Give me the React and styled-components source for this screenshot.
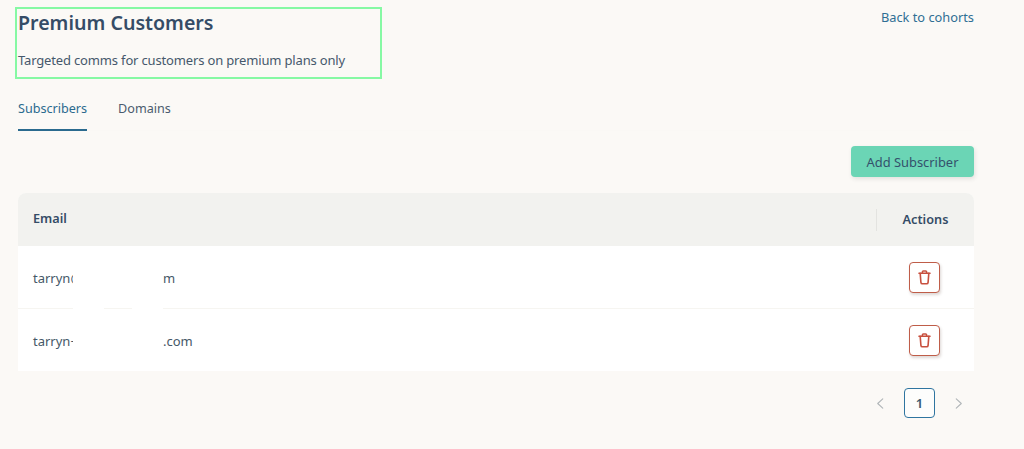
import React from "react";
import styled, { createGlobalStyle } from "styled-components";

const Global = createGlobalStyle`
  html, body { margin: 0; padding: 0; background: #fbf9f6; }
  body { font-family: "Noto Sans", "Open Sans", sans-serif; color: #3b5068; }
  * { box-sizing: border-box; }
`;

const Page = styled.div`
  width: 1024px;
  height: 449px;
  overflow: hidden;
  padding: 7px 50px 0 18px;
  background: #fbf9f6;
`;

const Head = styled.header`
  display: flex;
  justify-content: space-between;
  align-items: flex-start;
`;

const TitleBlock = styled.div`
  width: 367px;
  height: 72px;
  margin-left: -3px;
  padding: 0 0 0 3px;
  border: 2px solid #86f9a4;
`;

const Title = styled.h1`
  margin: 0 0 0 -2px;
  font-size: 19.6px;
  line-height: 28px;
  font-weight: 600;
  color: #354c66;
`;

const Subtitle = styled.p`
  margin: 13px 0 0 -2px;
  font-size: 13px;
  letter-spacing: -0.16px;
  line-height: 20px;
  color: #46586c;
`;

const BackLink = styled.a`
  font-size: 12.8px;
  line-height: 20px;
  color: #2f6f94;
`;

const Tabs = styled.nav`
  display: flex;
  gap: 31px;
  margin-top: 12px;
  height: 40px;
  border-bottom: 1px solid #faf8f5;
`;

const Tab = styled.div`
  height: 40px;
  padding-top: 8px;
  font-size: 12.6px;
  line-height: 20px;
  color: ${(p) => (p.$active ? "#2a6a8e" : "#4a5b6e")};
  border-bottom: ${(p) => (p.$active ? "2px solid #2a6a8e" : "none")};
`;

const Toolbar = styled.div`
  display: flex;
  justify-content: flex-end;
  margin-top: 15px;
`;

const AddButton = styled.button`
  width: 123px;
  height: 31px;
  border: 0;
  border-radius: 4px;
  background: #6bd5b5;
  box-shadow: 1px 2px 4px rgba(60, 60, 60, 0.12);
  font: 400 12.9px "Noto Sans", sans-serif;
  color: #34516c;
`;

const Table = styled.section`
  position: relative;
  margin-top: 16px;
  border-radius: 8px 8px 0 0;
  overflow: hidden;
  background: #fff;
`;

const HeaderRow = styled.div`
  display: grid;
  grid-template-columns: 1fr 98px;
  height: 53px;
  align-items: center;
  background: #f2f2ef;
  font-size: 12.7px;
  font-weight: 600;
  color: #354c66;
`;

const EmailHead = styled.div`
  padding: 0 0 3px 15px;
`;

const ActionsHead = styled.div`
  height: 22px;
  padding-bottom: 2px;
  line-height: 20px;
  text-align: center;
  border-left: 1px solid #e3e3e0;
`;

const Row = styled.div`
  display: grid;
  grid-template-columns: 1fr 98px;
  align-items: center;
  height: ${(p) => (p.$last ? "62px" : "63px")};
  border-bottom: ${(p) => (p.$last ? "none" : "1px solid #f6f5f1")};
`;

const Email = styled.div`
  display: flex;
  padding: 1px 0 0 15px;
  font-size: 13px;
  line-height: 20px;
  color: #465868;
`;

const Visible = styled.span`
  width: 40px;
  white-space: nowrap;
`;

const Hidden = styled.span`
  position: relative;
  width: 90px;
  flex: none;
  background: #fff;
`;

const ActionCell = styled.div`
  display: flex;
  justify-content: center;
  padding-right: 2px;
`;

const DeleteButton = styled.button`
  display: flex;
  align-items: center;
  justify-content: center;
  width: 31px;
  height: 31px;
  padding: 0;
  border: 1px solid #bf5d49;
  border-radius: 4px;
  background: #fff;
  box-shadow: 1px 2px 3px rgba(90, 60, 50, 0.2);
`;

const Redaction = styled.span`
  position: absolute;
  top: 114px;
  left: ${(p) => p.$left}px;
  width: 31px;
  height: 3px;
  background: #fff;
`;

const Pager = styled.div`
  display: flex;
  align-items: center;
  justify-content: flex-end;
  gap: 18px;
  margin-top: 17px;
  padding-right: 9px;
`;

const PageArrow = styled.span`
  display: flex;
  width: 12px;
  justify-content: center;
`;

const PageNumber = styled.div`
  width: 31px;
  height: 30px;
  border: 1px solid #2f75a0;
  border-radius: 4px;
  background: #fdfdfc;
  text-align: center;
  line-height: 28px;
  font-size: 13px;
  font-weight: 600;
  color: #3a5a70;
`;

const TrashIcon = () => (
  <svg width="13" height="15" viewBox="0 0 13 15" fill="none" stroke="#c8503f" strokeWidth="1.6" strokeLinecap="round" strokeLinejoin="round">
    <path d="M1 3.2h11" />
    <path d="M4.4 3V1.9c0-.5.3-.9.9-.9h2.4c.6 0 .9.4.9.9V3" />
    <path d="M2.2 3.4l.7 8.9c.1.9.6 1.5 1.4 1.5h4.4c.8 0 1.3-.6 1.4-1.5l.7-8.9" />
  </svg>
);

const Chevron = ({ dir }) => (
  <svg width="8" height="11" viewBox="0 0 8 12" fill="none" stroke="#b0b5b8" strokeWidth="1.2" strokeLinecap="round" strokeLinejoin="round">
    <path d={dir === "left" ? "M7 1L1.5 6 7 11" : "M1 1l5.5 5L1 11"} />
  </svg>
);

const rows = [
  { head: "tarryn@", tail: "m" },
  { head: "tarryn+", tail: ".com" },
];

export default function App() {
  return (
    <Page>
      <Global />
      <Head>
        <TitleBlock>
          <Title>Premium Customers</Title>
          <Subtitle>Targeted comms for customers on premium plans only</Subtitle>
        </TitleBlock>
        <BackLink>Back to cohorts</BackLink>
      </Head>
      <Tabs>
        <Tab $active>Subscribers</Tab>
        <Tab>Domains</Tab>
      </Tabs>
      <Toolbar>
        <AddButton>Add Subscriber</AddButton>
      </Toolbar>
      <Table>
        <HeaderRow>
          <EmailHead>Email</EmailHead>
          <ActionsHead>Actions</ActionsHead>
        </HeaderRow>
        {rows.map((r, i) => (
          <Row key={r.head} $last={i === rows.length - 1}>
            <Email>
              <Visible>{r.head}</Visible>
              <Hidden />
              <span>{r.tail}</span>
            </Email>
            <ActionCell>
              <DeleteButton aria-label="Delete">
                <TrashIcon />
              </DeleteButton>
            </ActionCell>
          </Row>
        ))}
        <Redaction $left={55} />
        <Redaction $left={114} />
      </Table>
      <Pager>
        <PageArrow><Chevron dir="left" /></PageArrow>
        <PageNumber>1</PageNumber>
        <PageArrow><Chevron dir="right" /></PageArrow>
      </Pager>
    </Page>
  );
}
